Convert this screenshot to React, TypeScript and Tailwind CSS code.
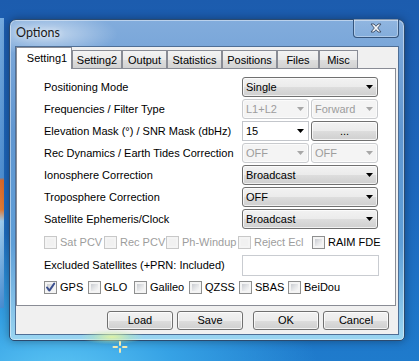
import React from "react";

const ui = "font-['Liberation_Sans',Arial,sans-serif] text-[11px] leading-none";

type ComboKind = "list" | "disabled" | "edit";

function DropArrow({ dim }: { dim?: boolean }) {
  return (
    <svg width="7" height="4" viewBox="0 0 7 4" className="shrink-0">
      <polygon points="0,0 7,0 3.5,4" fill={dim ? "#a7a7a7" : "#000"} />
    </svg>
  );
}

function Combo({ value, kind, width }: { value: string; kind: ComboKind; width: string }) {
  const look =
    kind === "list"
      ? "rounded-[3px] border-[#707070] bg-[linear-gradient(180deg,#f2f2f2_0%,#ebebeb_50%,#dddddd_51%,#cfcfcf_100%)] text-black shadow-[inset_0_0_0_1px_rgba(255,255,255,0.7)]"
      : kind === "disabled"
        ? "rounded-[3px] border-[#c9cbce] bg-[#f4f4f4] text-[#9d9d9d] shadow-[inset_0_0_0_1px_#fbfbfb]"
        : "border-[#c3c6cb] bg-white text-black";
  return (
    <div className={`flex h-[20px] ${width} items-center justify-between border pl-[3px] pr-[4px] ${look}`}>
      <span>{value}</span>
      <DropArrow dim={kind === "disabled"} />
    </div>
  );
}

function Btn({ label, width }: { label: string; width: string }) {
  return (
    <div
      className={`flex ${width} items-center justify-center rounded-[3px] border border-[#707070] bg-[linear-gradient(180deg,#f2f2f2_0%,#ebebeb_50%,#dddddd_51%,#cfcfcf_100%)] text-black shadow-[inset_0_0_0_1px_rgba(255,255,255,0.75)]`}
    >
      {label}
    </div>
  );
}

function CheckBox({ label, width, checked, disabled }: { label: string; width: string; checked?: boolean; disabled?: boolean }) {
  return (
    <div className={`flex ${width} items-center gap-[3px]`}>
      <div
        className={`relative h-[13px] w-[13px] shrink-0 border p-[2px] ${
          disabled ? "border-[#c8c8c8] bg-[#f4f4f4]" : "border-[#8e8f8f] bg-[#f4f4f4]"
        }`}
      >
        <div
          className={`h-full w-full ${
            disabled ? "bg-[#f1f1f1]" : "bg-[linear-gradient(135deg,#c9ccd1_0%,#e6e7e9_55%,#f8f8f8_100%)]"
          }`}
        />
        {checked && (
          <svg width="13" height="13" viewBox="0 0 13 13" className="absolute left-[-1px] top-[-1px]">
            <path d="M3 6.4 L5.4 9.6 L10.2 2.6" fill="none" stroke="#3b4f8f" strokeWidth="1.9" strokeLinecap="round" strokeLinejoin="round" />
          </svg>
        )}
      </div>
      <span className={disabled ? "text-[#9d9d9d]" : "text-black"}>{label}</span>
    </div>
  );
}

const tabs = [
  { name: "Setting2", w: "w-[50px]" },
  { name: "Output", w: "w-[45px]" },
  { name: "Statistics", w: "w-[55px]" },
  { name: "Positions", w: "w-[55px]" },
  { name: "Files", w: "w-[42px]" },
  { name: "Misc", w: "w-[39px]" },
];

function Row({ label, children }: { label: string; children: React.ReactNode }) {
  return (
    <div className="flex h-[20px] items-center">
      <span className="w-[198px] text-black">{label}</span>
      <div className="flex w-[136px] gap-[2px]">{children}</div>
    </div>
  );
}

export default function App() {
  return (
    <div
      className={`relative h-[361px] w-[419px] overflow-hidden bg-[radial-gradient(ellipse_260px_150px_at_60px_380px,#5fc8f5_0%,#36a2e5_45%,rgba(40,130,215,0)_100%),linear-gradient(180deg,#1c5cae_0%,#1d66bb_50%,#1f7bcc_100%)] ${ui}`}
    >
      {/* edge of a window behind */}
      <div className="absolute left-0 top-[18px] h-[290px] w-[4px] bg-[linear-gradient(180deg,#76ace0_0%,#4e8fd2_55%,#d9682a_56%,#e07a34_66%,#9fcdef_70%,#4a8fd4_100%)]" />

      {/* the dialog */}
      <div className="absolute left-[9px] top-[19px] flex h-[322px] w-[396px] flex-col rounded-t-[7px] rounded-b-[5px] border border-[#2b4a6f] bg-[radial-gradient(ellipse_70px_22px_at_38px_14px,rgba(255,255,255,0.55),rgba(255,255,255,0)),linear-gradient(180deg,#82acdc_0%,#6197d1_35%,#5f9fd8_70%,#9ad5f1_100%)] shadow-[inset_0_0_0_1px_rgba(255,255,255,0.45),0_0_10px_rgba(0,0,0,0.35)]">
        <div className="flex h-[26px] items-center pl-[6px]">
          <span className="font-['Lato','Liberation_Sans',sans-serif] text-[12.5px] text-[#1b1b1b] [text-shadow:0_0_6px_rgba(255,255,255,0.9)]">
            Options
          </span>
        </div>

        {/* close button */}
        <div className="absolute right-[5px] top-[-1px] flex h-[19px] w-[46px] items-center justify-center rounded-b-[4px] border border-t-0 border-[#35557d] bg-[linear-gradient(180deg,rgba(255,255,255,0.12),rgba(255,255,255,0.05))] shadow-[inset_0_0_0_1px_rgba(255,255,255,0.35)]">
          <svg width="12" height="10" viewBox="0 0 12 10">
            <path
              d="M1 1 H4 L6 3.3 L8 1 H11 L7.7 5 L11 9 H8 L6 6.7 L4 9 H1 L4.3 5 Z"
              fill="#f4f6f9"
              stroke="#3a4a62"
              strokeWidth="0.9"
              strokeLinejoin="round"
            />
          </svg>
        </div>

        {/* client area */}
        <div className="mx-[5px] flex h-[289px] w-[384px] flex-col border border-[#4f6f96] bg-[#f0f0f0]">
          <div className="flex h-[21px] items-end">
            <div className="relative z-10 mb-[-1px] flex h-[22px] w-[56px] items-center justify-center border border-b-0 border-[#898c95] bg-white pl-[6px] text-black">
              Setting1
            </div>
            {tabs.map((t) => (
              <div
                key={t.name}
                className={`flex h-[18px] ${t.w} items-center justify-center border border-b-0 border-[#898c95] bg-[linear-gradient(180deg,#f3f3f3_0%,#ebebeb_50%,#dedede_51%,#d2d2d2_100%)] pt-[1px] text-black`}
              >
                {t.name}
              </div>
            ))}
          </div>

          <div className="flex h-[238px] w-[380px] flex-col gap-[2px] border border-[#898c95] bg-white pl-[27px] pt-[8px]">
            <Row label="Positioning Mode">
              <Combo value="Single" kind="list" width="w-[136px]" />
            </Row>
            <Row label="Frequencies / Filter Type">
              <Combo value="L1+L2" kind="disabled" width="w-[67px]" />
              <Combo value="Forward" kind="disabled" width="w-[67px]" />
            </Row>
            <Row label="Elevation Mask (°) / SNR Mask (dbHz)">
              <Combo value="15" kind="edit" width="w-[67px]" />
              <div className="flex h-[20px] w-[67px]">
                <Btn label="..." width="w-full" />
              </div>
            </Row>
            <Row label="Rec Dynamics / Earth Tides Correction">
              <Combo value="OFF" kind="disabled" width="w-[67px]" />
              <Combo value="OFF" kind="disabled" width="w-[67px]" />
            </Row>
            <Row label="Ionosphere Correction">
              <Combo value="Broadcast" kind="list" width="w-[136px]" />
            </Row>
            <Row label="Troposphere Correction">
              <Combo value="OFF" kind="list" width="w-[136px]" />
            </Row>
            <Row label="Satellite Ephemeris/Clock">
              <Combo value="Broadcast" kind="list" width="w-[136px]" />
            </Row>

            <div className="flex h-[22px] items-center">
              <CheckBox label="Sat PCV" width="w-[60px]" disabled />
              <CheckBox label="Rec PCV" width="w-[62px]" disabled />
              <CheckBox label="Ph-Windup" width="w-[72px]" disabled />
              <CheckBox label="Reject Ecl" width="w-[74px]" disabled />
              <CheckBox label="RAIM FDE" width="w-[70px]" />
            </div>

            <div className="flex h-[21px] items-center">
              <span className="w-[198px] text-black">Excluded Satellites (+PRN: Included)</span>
              <div className="h-[21px] w-[137px] border border-[#c9ccd1] bg-white" />
            </div>

            <div className="flex h-[18px] items-center">
              <CheckBox label="GPS" width="w-[44px]" checked />
              <CheckBox label="GLO" width="w-[46px]" />
              <CheckBox label="Galileo" width="w-[55px]" />
              <CheckBox label="QZSS" width="w-[50px]" />
              <CheckBox label="SBAS" width="w-[49px]" />
              <CheckBox label="BeiDou" width="w-[60px]" />
            </div>
          </div>

          <div className="flex flex-1 items-start justify-end pr-[9px] pt-[5px]">
            <div className="flex h-[19px] gap-[4px]">
              <Btn label="Load" width="w-[66px]" />
              <Btn label="Save" width="w-[66px]" />
            </div>
            <div className="ml-[10px] flex h-[19px] gap-[4px]">
              <Btn label="OK" width="w-[66px]" />
              <Btn label="Cancel" width="w-[66px]" />
            </div>
          </div>
        </div>
      </div>

      {/* glass glow and cursor */}
      <div className="absolute left-[82px] top-[330px] h-[14px] w-[60px] bg-[radial-gradient(ellipse_at_center,rgba(236,248,150,0.85)_0%,rgba(190,235,170,0.35)_45%,rgba(160,220,240,0)_75%)]" />
      <svg width="16" height="12" viewBox="0 0 16 12" className="absolute left-[112px] top-[341px]">
        <g stroke="#f2e9b0" strokeWidth="2" strokeLinecap="round">
          <line x1="8" y1="1" x2="8" y2="4" />
          <line x1="8" y1="8" x2="8" y2="11" />
          <line x1="1.5" y1="6" x2="5" y2="6" />
          <line x1="11" y1="6" x2="14.5" y2="6" />
        </g>
      </svg>
    </div>
  );
}
